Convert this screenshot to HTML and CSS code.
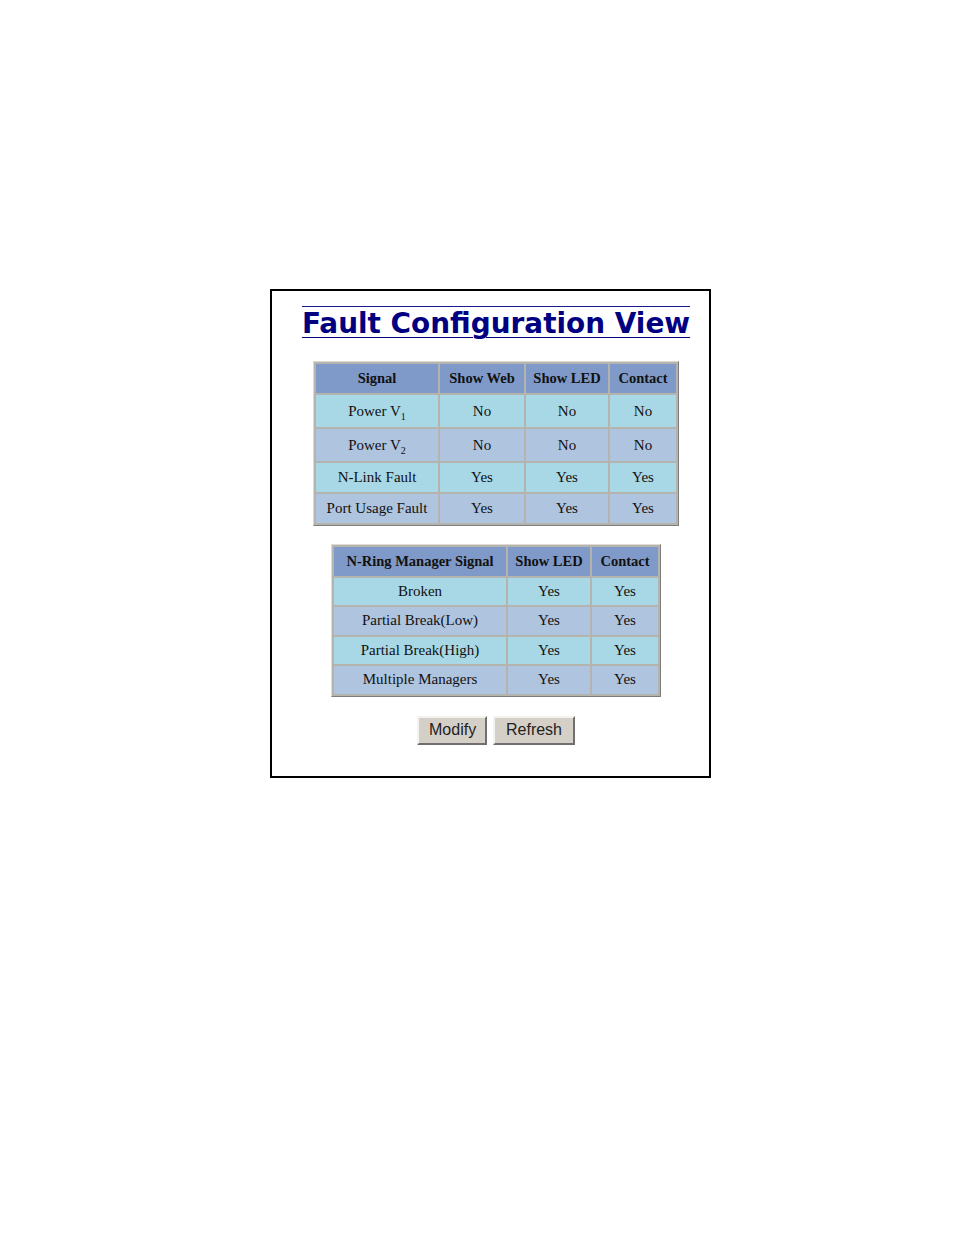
FILE: index.html
```
<!DOCTYPE html>
<html>
<head>
<meta charset="utf-8">
<link rel="stylesheet" href="styles.css">
</head>
<body>
<div class="frame">
  <div class="content">
    <h1 class="title"><span class="title-text">Fault Configuration View</span></h1>
    <table class="grid grid-1">
      <tr class="head"><th>Signal</th><th>Show Web</th><th>Show LED</th><th>Contact</th></tr>
      <tr class="r1 tall"><td>Power V<sub>1</sub></td><td>No</td><td>No</td><td>No</td></tr>
      <tr class="r2 tall"><td>Power V<sub>2</sub></td><td>No</td><td>No</td><td>No</td></tr>
      <tr class="r1"><td>N-Link Fault</td><td>Yes</td><td>Yes</td><td>Yes</td></tr>
      <tr class="r2"><td>Port Usage Fault</td><td>Yes</td><td>Yes</td><td>Yes</td></tr>
    </table>
    <table class="grid grid-2">
      <tr class="head"><th>N-Ring Manager Signal</th><th>Show LED</th><th>Contact</th></tr>
      <tr class="r1"><td>Broken</td><td>Yes</td><td>Yes</td></tr>
      <tr class="r2"><td>Partial Break(Low)</td><td>Yes</td><td>Yes</td></tr>
      <tr class="r1"><td>Partial Break(High)</td><td>Yes</td><td>Yes</td></tr>
      <tr class="r2"><td>Multiple Managers</td><td>Yes</td><td>Yes</td></tr>
    </table>
    <div class="buttons">
      <button class="btn btn-modify">Modify</button>
      <button class="btn btn-refresh">Refresh</button>
    </div>
  </div>
</div>
</body>
</html>
```
FILE: styles.css
```
html, body {
  margin: 0;
  padding: 0;
  background: #ffffff;
}
body {
  font-family: "Liberation Serif", "Times New Roman", serif;
  color: #111;
}
.frame {
  margin-left: 270px;
  margin-top: 289px;
  width: 437px;
  border: 2px solid #000;
  padding-bottom: 31px;
}
.content {
  padding-left: 11px;
  display: flex;
  flex-direction: column;
  align-items: center;
}
.title {
  margin: 15px 0 0 0;
  border-top: 1px solid #1a1a8c;
  font-family: "DejaVu Sans", Verdana, sans-serif;
  font-weight: bold;
  font-size: 27.9px;
  line-height: 32px;
  color: #000080;
  text-decoration: underline;
  text-decoration-thickness: 1px;
  text-underline-offset: 4px;
  padding-top: 1px;
}
.grid {
  border-collapse: separate;
  border-spacing: 2px;
  background: #b4b3ae;
  border: 1px solid;
  border-color: #dedbd3 #7d7d7d #7d7d7d #dedbd3;
  table-layout: fixed;
  margin-top: 21px;
}
.grid th, .grid td {
  text-align: center;
  padding: 0;
  white-space: nowrap;
  overflow: visible;
}
.grid th {
  font-weight: bold;
  font-size: 14.5px;
  background: #7f99c8;
}
.grid td {
  font-size: 15px;
}
.grid-1 th, .grid-1 td {
  height: 29px;
}
.grid-1 tr.tall td {
  height: 32px;
}
.grid sub {
  font-size: 10px;
  line-height: 0;
}
.r1 td {
  background: #a8d8e6;
}
.r2 td {
  background: #afc4df;
}
.grid-1 { width: 366px; }
.grid-1 th:nth-child(1) { width: 122px; }
.grid-1 th:nth-child(2) { width: 84px; }
.grid-1 th:nth-child(3) { width: 82px; }
.grid-1 th:nth-child(4) { width: 66px; }
.grid-2 {
  margin-top: 18px;
  width: 330px;
}
.grid-2 th { height: 28.5px; }
.grid-2 td { height: 27.5px; }
.grid-2 th:nth-child(1) { width: 172px; }
.grid-2 th:nth-child(2) { width: 82px; }
.grid-2 th:nth-child(3) { width: 66px; }
.buttons {
  margin-top: 19px;
  display: flex;
  gap: 6px;
}
.btn {
  font-family: "Liberation Sans", Arial, sans-serif;
  font-size: 16px;
  color: #222;
  background: #d4d0c8;
  height: 29px;
  padding: 0 10px;
  border: 2px solid;
  border-color: #f4f3ef #6f6f6f #6f6f6f #f4f3ef;
  margin: 0;
}
.btn-modify { width: 70px; }
.btn-refresh { width: 82px; }
```
